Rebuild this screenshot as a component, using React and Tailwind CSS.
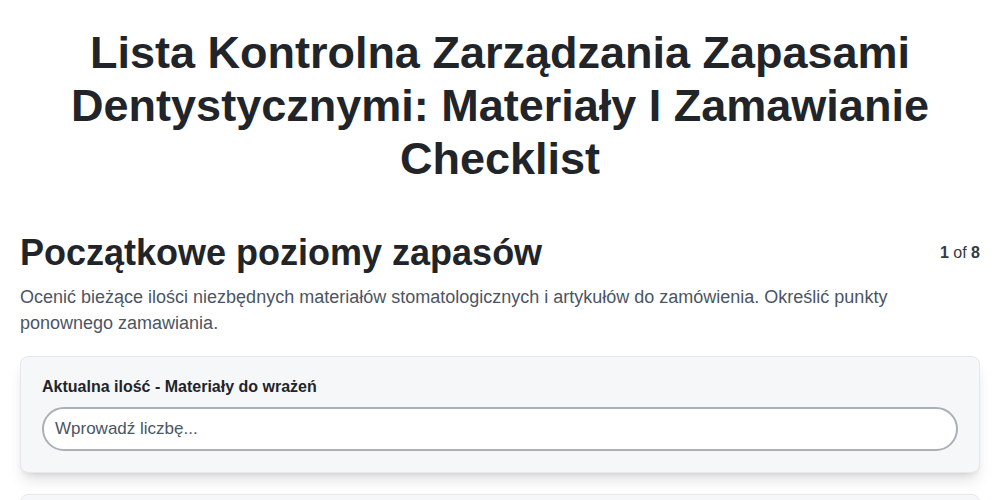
const App = () => {
  return (
    <div
      className="min-h-screen bg-white text-[#1f2328] px-5 pt-[26px]"
      style={{ fontFamily: '"Liberation Sans", Arial, sans-serif' }}
    >
      <h1 className="text-center font-bold text-[45px] leading-[53px] text-[#212529] px-10">
        Lista Kontrolna Zarządzania Zapasami Dentystycznymi: Materiały I Zamawianie Checklist
      </h1>

      <div className="mt-[48px]">
        <div className="flex items-start justify-between">
          <h2 className="text-[36px] leading-[40px] font-bold text-[#212529]">
            Początkowe poziomy zapasów
          </h2>
          <div className="text-base text-[#343a40] mt-[8px]">
            <span className="font-bold">1</span> of <span className="font-bold">8</span>
          </div>
        </div>
        <p className="mt-[11px] text-lg leading-[26px] text-[#4b5563]">
          Ocenić bieżące ilości niezbędnych materiałów stomatologicznych i artykułów do zamówienia. Określić punkty ponownego zamawiania.
        </p>

        <div className="mt-[20px] flex flex-col gap-[21px]">
          <div className="bg-[#f6f7f9] border border-[#e5e7eb] rounded-lg shadow-[0_10px_15px_-3px_rgba(0,0,0,0.12),0_4px_6px_-4px_rgba(0,0,0,0.12)] px-[21px] pt-[20px] pb-[21px]">
            <label className="block text-base leading-[20px] font-bold text-[#212529] mb-[10px]">
              Aktualna ilość - Materiały do wrażeń
            </label>
            <input
              type="text"
              placeholder="Wprowadź liczbę..."
              className="w-full h-[44px] rounded-full border-2 border-[#aab0b6] bg-white px-[11px] text-[17px] text-[#212529] placeholder:text-[#4b5563] outline-none"
            />
          </div>
          <div className="bg-[#f6f7f9] border border-[#e5e7eb] rounded-lg shadow-[0_10px_15px_-3px_rgba(0,0,0,0.12),0_4px_6px_-4px_rgba(0,0,0,0.12)] h-[115px]" />
        </div>
      </div>
    </div>
  );
};

export default App;
